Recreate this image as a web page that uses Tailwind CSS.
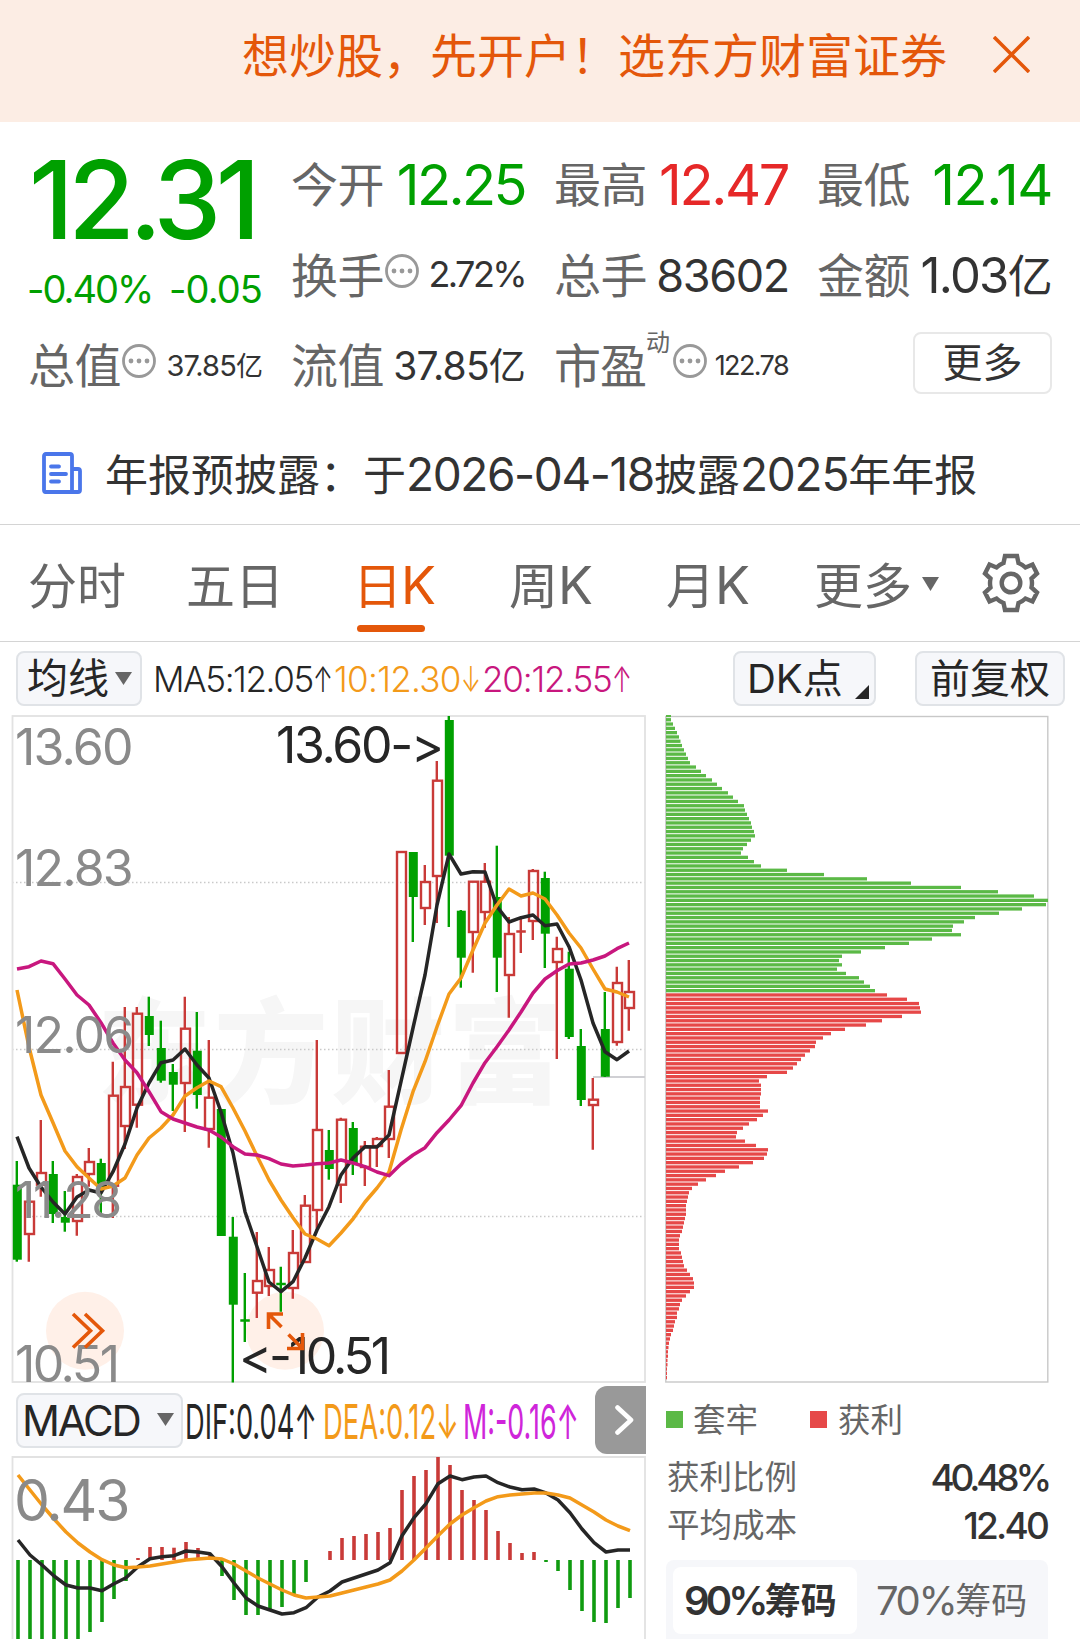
<!DOCTYPE html>
<html lang="zh-CN">
<head>
  <meta charset="UTF-8" />
  <meta name="viewport" content="width=device-width, initial-scale=1.0"/>
  <title>个股行情 - 日K</title>

  <!-- Tailwind CSS -->
  <script src="https://cdn.jsdelivr.net/npm/@tailwindcss/browser@4"></script>
</head>

<body class="bg-white">
<div class="w-[1080px] h-[1639px] overflow-hidden font-['Inter','Noto_Sans_CJK_SC',sans-serif] leading-none text-[#333] whitespace-nowrap">

  <!-- ==================== BANNIERE ==================== -->
  <header class="h-[122px] bg-[#fcede4] flex justify-end items-center pr-[50px] pb-[12px] text-[#e4570a]">
    <span class="text-[47px] mr-[46px]">想炒股，先开户！选东方财富证券</span>
    <svg class="w-[37px] h-[37px] -mt-[2px]" viewBox="0 0 37 37" fill="none" stroke="currentColor" stroke-width="3.6">
      <path d="M1 1L36 36M36 1L1 36"/>
    </svg>
  </header>

  <!-- ==================== COTATION ==================== -->
  <section class="pl-[28px] pr-[29px] pt-[17px] grid grid-cols-[234px_233px_233px_233px] grid-rows-[91px_90px_90px] gap-x-[30px] text-[#666] text-[47px]">
    <div class="row-span-2 text-[#00a000]">
      <div class="mt-[7px] ml-px text-[108px] font-medium tracking-[-5.6px]">12.31</div>
      <div class="mt-[16px] flex justify-between text-[38px]">
        <span class="-ml-px tracking-[-2px]">-0.40%</span><span class="tracking-[-0.9px]">-0.05</span>
      </div>
    </div>
    <div class="flex items-center justify-between"><span class="-ml-px tracking-[-0.5px]">今开</span><span class="text-[56px] tracking-[-2.6px] text-[#00a000]">12.25</span></div>
    <div class="flex items-center justify-between"><span class="-ml-px tracking-[-0.5px]">最高</span><span class="text-[56px] tracking-[-2.4px] text-[#e62828]">12.47</span></div>
    <div class="flex items-center justify-between"><span class="-ml-px tracking-[-0.5px]">最低</span><span class="-mr-px text-[56px] tracking-[-1.5px] text-[#00a000]">12.14</span></div>

    <div class="flex items-center justify-between">
      <div class="flex items-center"><span class="-ml-px tracking-[-0.5px]">换手</span>
        <svg class="w-[34px] h-[34px] -mt-[9px] ml-px" viewBox="0 0 34 34"><circle cx="17" cy="17" r="15.500" fill="none" stroke="#999" stroke-width="2.800"/><g fill="#999"><circle cx="9" cy="17" r="2.400"/><circle cx="17" cy="17" r="2.400"/><circle cx="25" cy="17" r="2.400"/></g></svg>
      </div>
      <span class="-mt-[2px] text-[36px] tracking-[-2.6px] text-[#333]">2.72%</span>
    </div>
    <div class="flex items-center justify-between"><span class="-ml-px tracking-[-0.5px]">总手</span><span class="-mr-px text-[45px] tracking-[-1.3px] text-[#333]">83602</span></div>
    <div class="flex items-center justify-between"><span class="-ml-px tracking-[-0.5px]">金额</span><span class="text-[49px] tracking-[-1.7px] text-[#333]">1.03<span class="text-[45px]">亿</span></span></div>

    <div class="flex items-center justify-between">
      <div class="flex items-center"><span class="tracking-[-0.5px]">总值</span>
        <svg class="w-[34px] h-[34px] -mt-[9px] ml-px" viewBox="0 0 34 34"><circle cx="17" cy="17" r="15.500" fill="none" stroke="#999" stroke-width="2.800"/><g fill="#999"><circle cx="9" cy="17" r="2.400"/><circle cx="17" cy="17" r="2.400"/><circle cx="25" cy="17" r="2.400"/></g></svg>
      </div>
      <span class="text-[29px] tracking-[-0.9px] text-[#333]">37.85<span class="text-[27px]">亿</span></span>
    </div>
    <div class="flex items-center justify-between"><span class="-ml-px tracking-[-0.5px]">流值</span><span class="text-[39px] tracking-[-0.8px] text-[#333]">37.85<span class="text-[37px]">亿</span></span></div>
    <div class="flex items-center justify-between">
      <div class="flex items-center"><span class="-ml-px tracking-[-1px]">市盈</span><span class="text-[24px] -mt-[44px]">动</span>
        <svg class="w-[34px] h-[34px] -mt-[8px] ml-[3px]" viewBox="0 0 34 34"><circle cx="17" cy="17" r="15.500" fill="none" stroke="#999" stroke-width="2.800"/><g fill="#999"><circle cx="9" cy="17" r="2.400"/><circle cx="17" cy="17" r="2.400"/><circle cx="25" cy="17" r="2.400"/></g></svg>
      </div>
      <span class="text-[27px] tracking-[-1.6px] text-[#333]">122.78</span>
    </div>
    <div class="flex items-center justify-end">
      <button class="w-[139px] h-[62px] -mt-[4px] -mr-px border-2 border-[#e8e8e8] rounded-lg text-[40px] text-[#333]">更多</button>
    </div>
  </section>

  <!-- Annonce -->
  <section class="h-[115px] pl-[42px] pt-[13px] flex items-center border-b border-[#d4d4d4] text-[43px]">
    <svg class="w-[40px] h-[42px] mr-[23px] -mt-[2px]" viewBox="0 0 40 42" fill="none" stroke="#4a76ea" stroke-width="3.800" stroke-linecap="round" stroke-linejoin="round">
      <path d="M30 40H3.500Q2 40 2 38V4Q2 2 4 2H28Q30 2 30 4V40H36Q38 40 38 38V19Q38 17 36 17H30.500M9 14.500H17M9 22H24M9 29.500H17"/>
    </svg>
    <span>年报预披露：于<span class="text-[46px] tracking-[-1.4px]">2026-04-18</span>披露<span class="text-[46px] tracking-[-1.2px]">2025</span>年年报</span>
  </section>

  <!-- ==================== ONGLETS ==================== -->
  <nav class="h-[117px] pl-[28px] pt-[6px] flex items-center border-b border-[#d4d4d4] text-[49px] text-[#666]">
    <a>分时</a>
    <a class="ml-[60px]">五日</a>
    <a class="ml-[69px] relative text-[#e4570a]">日<span class="text-[52px] -ml-px">K</span>
      <i class="absolute left-[4px] -bottom-[20px] w-[68px] h-[7px] rounded-full bg-[#e4570a]"></i>
    </a>
    <a class="ml-[73px]">周<span class="text-[52px]">K</span></a>
    <a class="ml-[73px]">月<span class="text-[52px]">K</span></a>
    <a class="ml-[64px] flex items-center">更多
      <svg class="w-[17px] h-[14px] ml-[10px] -mt-[5px]" viewBox="0 0 17 14"><path d="M0 0H17L8.500 14Z" fill="#666"/></svg>
    </a>
    <svg class="w-[58px] h-[60px] ml-[43px] -mt-[6px]" viewBox="-29 -30 58 60" fill="none" stroke="#666" stroke-width="4.400">
      <path d="M-6 -27H6L7.500 -20Q11.500 -18.500 14.500 -15.500L21.500 -18.500L26 -9.500L20.500 -4.500Q21.500 0 20.500 4.500L26 9.500L21.500 18.500L14.500 15.500Q11.500 18.500 7.500 20L6 27H-6L-7.500 20Q-11.500 18.500 -14.500 15.500L-21.500 18.500L-26 9.500L-20.500 4.500Q-21.500 0 -20.500 -4.500L-26 -9.500L-21.500 -18.500L-14.500 -15.500Q-11.500 -18.500 -7.500 -20Z"/>
      <circle r="9.300"/>
    </svg>
  </nav>

  <!-- ==================== BARRE D'INDICATEURS ==================== -->
  <div class="h-[73px] pl-[16px] pr-[15px] flex items-center text-[#262626]">
    <button class="w-[126px] h-[55px] border-2 border-[#e0e3e7] rounded-lg bg-[#f6f7fa] flex items-center pl-[9px] text-[41px]">均线
      <svg class="w-[17px] h-[13px] ml-[6px]" viewBox="0 0 17 13"><path d="M0 0H17L8.500 13Z" fill="#666"/></svg>
    </button>
    <div class="flex items-center text-[35px] font-[350] ml-[11px] pt-[2px]">
      <span class="flex w-[181px] tracking-[-1.4px]">MA5:12.05<i class="not-italic inline-block w-[17px] origin-left scale-x-[.68]">↑</i></span>
      <span class="flex w-[148px] tracking-[-0.7px] text-[#f39a1a]">10:12.30<i class="not-italic inline-block w-[17px] origin-left scale-x-[.68]">↓</i></span>
      <span class="flex tracking-[-1.2px] text-[#c8177e]">20:12.55<i class="not-italic inline-block w-[17px] origin-left scale-x-[.68]">↑</i></span>
    </div>
    <button class="relative ml-auto w-[143px] h-[55px] border-2 border-[#e0e3e7] rounded-lg bg-[#f6f7fa] text-left pl-[12px] text-[40px]">DK点
      <svg class="absolute right-[5px] bottom-[5px] w-[14px] h-[14px]" viewBox="0 0 14 14"><path d="M14 0V14H0Z" fill="#262626"/></svg>
    </button>
    <button class="ml-[39px] w-[150px] h-[55px] border-2 border-[#e0e3e7] rounded-lg bg-[#f6f7fa] text-[40px]">前复权</button>
  </div>

  <!-- ==================== GRAPHIQUES ==================== -->
  <main class="flex">
    <div class="w-[650px]">
      <!-- Chandeliers -->
      <svg class="block w-[650px] h-[668px]" viewBox="0 715 650 668">
        <text x="97" y="1094" font-family="Noto Sans CJK SC" font-weight="900" font-size="114" letter-spacing="3" fill="#f6f6f6">东方财富</text>
        <g stroke="#c9c9c9" stroke-width="1.300" stroke-dasharray="1.500 2.500">
          <path d="M12 882.500H645M12 1049.500H645M12 1216.500H645"/>
        </g>
        <rect x="12.500" y="716" width="632.500" height="666" fill="none" stroke="#e2e2e2" stroke-width="1.800"/>
        <path d="M593 1077H645" stroke="#d0d0d4" stroke-width="1.800"/>
        <circle cx="85" cy="1330.700" r="39" fill="#fff0e8"/>
        <circle cx="285" cy="1330.700" r="39" fill="#fff0e8"/>
        <g id="candles" stroke-width="2.400"></g>
        <g id="averages" fill="none" stroke-width="3.500" stroke-linejoin="round"></g>
        <g font-size="50" letter-spacing="-1.800" fill="#8a8a8a">
          <text x="15" y="764.500">13.60</text>
          <text x="15" y="885.500">12.83</text>
          <text x="15" y="1052.500">12.06</text>
          <text x="15" y="1218" letter-spacing="-2.300">11.28</text>
          <text x="15" y="1381.500" letter-spacing="-2.500">10.51</text>
        </g>
        <g class="[font-variant-ligatures:none] [font-feature-settings:'calt'_0]" font-size="50" fill="#262626">
          <text x="276" y="762.500" textLength="168">13.60-&gt;</text>
          <text x="239" y="1374" textLength="152">&lt;-10.51</text>
        </g>
        <g fill="none" stroke="#e4570a" stroke-width="3.600">
          <path d="M73 1314L90.500 1330.700L73 1347.500M85 1314L102.500 1330.700L85 1347.500"/>
          <path d="M283 1314H268.500V1329M268.500 1314L281.500 1327M288.500 1334.500L302 1348M287 1348.500H302.500V1333"/>
        </g>
      </svg>

      <!-- Barre MACD -->
      <div class="h-[73px] pl-[16px] pr-[4px] flex items-start">
        <button class="mt-[10px] w-[167px] h-[55px] border-2 border-[#e0e3e7] rounded-lg bg-[#f6f7fa] flex items-center pl-[4px] text-[42px] tracking-[-2.2px] text-[#262626]">MACD
          <svg class="w-[17px] h-[13px] ml-[17px] -mt-[3px]" viewBox="0 0 17 13"><path d="M0 0H17L8.500 13Z" fill="#666"/></svg>
        </button>
        <svg class="w-[400px] h-[60px] mt-[8px]" viewBox="183 1391 400 60" font-size="48">
          <text x="185" y="1438.500" textLength="132" lengthAdjust="spacingAndGlyphs" fill="#262626">DIF:0.04↑</text>
          <text x="323" y="1438.500" textLength="136" lengthAdjust="spacingAndGlyphs" fill="#f39a1a">DEA:0.12↓</text>
          <text x="463" y="1438.500" textLength="116" lengthAdjust="spacingAndGlyphs" fill="#cf25da">M:-0.16↑</text>
        </svg>
        <button class="ml-auto mt-[3px] w-[51px] h-[68px] rounded-l-xl bg-[#999] flex items-center pl-[20px]">
          <svg class="w-[19px] h-[30px]" viewBox="0 0 19 30" fill="none" stroke="#fff" stroke-width="4.600" stroke-linecap="round" stroke-linejoin="round"><path d="M2.500 2.500L16 15L2.500 27.500"/></svg>
        </button>
      </div>

      <!-- MACD -->
      <svg class="block w-[650px] h-[184px]" viewBox="0 1456 650 184">
        <path d="M12.500 1642V1457H645V1642" fill="none" stroke="#e2e2e2" stroke-width="1.800"/>
        <g id="bars" stroke-width="3.600"></g>
        <g id="macd" fill="none" stroke-width="3.500" stroke-linejoin="round"></g>
        <text x="14" y="1520.500" font-size="57" letter-spacing="-2.200" fill="#8a8a8a">0.43</text>
      </svg>
    </div>

    <!-- Répartition des jetons -->
    <div class="w-[382px] ml-[16px]">
      <svg class="block w-[384px] h-[668px] -ml-px" viewBox="665 715 384 668">
        <rect x="665.800" y="716.500" width="382" height="665.500" fill="none" stroke="#c8c8c8" stroke-width="1.400"/>
        <g id="chips"></g>
      </svg>
      <div class="mt-[21px] h-[34px] flex items-center text-[32.5px] text-[#666]">
        <i class="w-[17px] h-[17px] bg-[#5bb946] -mt-[3px] mr-[10px]"></i>套牢
        <i class="w-[17px] h-[17px] bg-[#e64848] -mt-[3px] ml-[52px] mr-[11px]"></i>获利
      </div>
      <div class="mt-[16px] h-[48px] flex items-center justify-between text-[32.5px] text-[#666]"><span class="ml-px">获利比例</span><span class="-mt-[2px] text-[37px] font-medium tracking-[-4.2px] text-[#333]">40.48%</span></div>
      <div class="h-[49px] flex items-center justify-between text-[32.5px] text-[#666]"><span class="ml-px">平均成本</span><span class="-mt-[2px] mr-px text-[37px] font-medium tracking-[-2.8px] text-[#333]">12.40</span></div>
      <div class="mt-[9px] h-[90px] p-[7px] pr-0 flex rounded-t-lg bg-[#f6f7fa] text-[36px] text-[#666]">
        <div class="w-[184px] h-[67px] rounded-lg bg-white flex items-center pl-[11px] text-[#333] font-semibold"><span class="text-[40px] tracking-[-3.8px]">90%</span>筹码</div>
        <div class="h-[67px] flex items-center pl-[19px]"><span class="text-[40px] tracking-[-2.4px]">70%</span>筹码</div>
      </div>
    </div>
  </main>
</div>

<script>
  const RED = '#c93a38', GREEN = '#00a000';

  // haut, haut du corps, bas du corps, bas, couleur (r/g)
  const candles = [
    [1161,1184.7,1259.7,1261.7,'g'],[1189,1201.7,1234,1261.7,'r'],[1120,1173,1184.7,1196.7,'r'],[1161,1174,1214,1223,'g'],
    [1191,1217,1222.7,1231.7,'g'],[1174,1177,1221,1235.7,'r'],[1148,1162,1174,1186.7,'r'],[1158.7,1163,1187,1213,'g'],
    [1061.7,1095.7,1185.7,1218,'r'],[1007,1087,1126,1149,'r'],[1007,1013.7,1104.7,1127.7,'r'],[996.7,1016,1035,1046,'g'],
    [1020.7,1048,1080.7,1082.7,'g'],[1064,1072,1084.7,1111,'g'],[996.7,1028.7,1083,1132,'r'],[1012,1050.7,1095,1108.7,'g'],
    [1040,1097.7,1129,1147.7,'r'],[1109,1109,1236,1236,'g'],[1217,1236.7,1304.7,1382.5,'g'],[1273,1319.5,1321.5,1342,'g'],
    [1232,1281,1292.7,1318,'r'],[1247,1270,1286,1296,'r'],[1266.7,1283,1285,1311.7,'g'],[1230,1253,1288,1298.7,'r'],
    [1195,1205.7,1262,1263,'r'],[1040,1130,1210,1231.7,'r'],[1130,1150,1169,1179.7,'g'],[1117.7,1119.7,1184.7,1203,'r'],
    [1122,1128,1163,1175,'g'],[1141,1146.7,1167,1186,'r'],[1137,1139,1146,1167,'r'],[1070,1106.7,1139,1158,'r'],
    [852,852,1053,1053,'r'],[852,852,897,942,'g'],[865,882,908,925,'r'],[761,780.7,876,923,'r'],
    [716,720,855.7,927,'g'],[910,910.7,957.7,987.7,'g'],[881,881.7,932,972.7,'r'],[863,881.7,912,927.7,'r'],
    [845.7,897,957.7,992,'g'],[917,934,975,1017.7,'r'],[918,930.5,932.5,953,'r'],[869,871,921,940,'r'],
    [871.7,878,933.7,968,'g'],[936.7,949,962,1059,'r'],[951.7,968.7,1037,1039,'g'],[1029,1046,1100,1106,'g'],
    [1078,1099.7,1105,1149.7,'r'],[992,1029,1076.7,1077,'g'],[966.7,983,1042,1045.7,'r'],[960,992,1008,1030.7,'r']
  ];
  const ma5 = [1136.7,1168,1187,1202,1214,1197,1190,1193,1171.7,1144,1108,1083,1062.7,1060,1049,1065,1078,1112,1153,1211.7,1246.7,1282,1291.7,1281.7,1258,1230,1206.7,1175,1158,1146.7,1147,1135,1081.7,1028,975,905,854,874,871.7,872,906.7,922,917.7,915,925.7,924,946.7,980,1023,1051.7,1059.7,1051];
  const ma10 = [990,1047,1095,1122.7,1151,1166.7,1178,1189,1186,1178,1155,1138,1128,1115,1096,1087.7,1081,1086.7,1108,1131,1156,1180,1200,1217.7,1234,1239,1245.7,1233,1219,1202,1188,1172,1130,1091.7,1061.7,1026.7,994,978,950,923,905,889,896,893,899,915,933,948,969,989,992,997];
  const ma20 = [969,966.7,961,963.7,979,995,1005,1022.7,1043,1060,1072.7,1091.7,1111.7,1119,1123,1127,1130,1137,1146.7,1154,1155,1158.7,1164,1166,1165,1163.7,1163,1160,1163,1166.7,1172,1175.7,1164,1155,1147.7,1132.7,1120,1105.7,1083,1062.7,1046.7,1030,1012,993,979,970.7,964,963,960,956,948.7,943];

  // MACD, ligne zéro à 1560
  const hist = [1641,1641,1641,1641,1641,1641,1632,1622,1599,1581,1558,1547,1547,1547.7,1542,1548,1554.7,1576,1600,1615,1615,1610,1607,1596,1582,1560,1551,1538,1536,1534,1532,1528,1490,1476,1470,1457,1465,1490,1500,1510,1531,1543,1553,1552,1562,1571,1590,1611,1622,1623,1608,1598];
  const dif = [1540,1555,1565,1576,1585,1588,1588,1590.7,1583.7,1577.7,1566.7,1558.7,1556.7,1555.7,1551,1552,1553.7,1566.7,1583,1598,1606,1610,1614,1612.7,1607.7,1597,1591,1582,1578,1574,1570,1562.7,1535.7,1517.7,1503.7,1483.7,1476,1479.7,1477,1476,1482.7,1487,1489.7,1489,1493,1500,1512.7,1529,1542.7,1552,1550,1550];
  const dea = [1475,1490,1505,1519,1532,1543,1552,1559.7,1565,1567.7,1567,1566,1564,1562,1560,1559,1558,1559,1564,1571,1578,1584,1590,1595,1598,1597,1596,1593,1590,1587,1584,1580,1571,1560,1548,1535.7,1524,1515,1507.7,1501,1496.7,1495,1494,1493,1493,1495,1498,1505,1512,1520,1526,1530.7];

  const chips = [5,5,7,9,11,13,14.5,16,18,20,22,24,30,35,40,46,51,56,62,67,72,78,79,81,83,85,86,88,89,85,81,77,75,82,88,95,121,158,201,245,295,332,368,382,380,356,333,309,298,287,286,295,266,243,219,195,176,173,176,171,180,193,198,204,209,
    221,241,253,254,255,236,216,200,179,165,157,150,149,144,139,135,131,127,121,101,93,95,95,95,94,94,94,102,97,91,83,77,71,70,79,90,102,101,98,87,73,59,50,40,32,26,23,22,21,20,20,20,19,18,17,16,14,13,13,13,15,16,17,18,21,24,27,28,28,24,20,16,14,13,11,11,9,8,7,5,4,3,2.5,2,2,1.5,1.5,1,1,1];

  document.getElementById('candles').innerHTML = candles.map(([h, t, b, l, c], i) => {
    const x = 17.3 + i * 12;
    if (b - t < 3) {
      const s = c === 'g' ? GREEN : RED;
      return `<path d="M${x - 0.5} ${h}V${l}M${x - 5} ${(t + b) / 2}H${x + 4.5}" stroke="${s}"/>`;
    }
    if (c === 'g') return `<path d="M${x - 0.5} ${h}V${l}" stroke="${GREEN}"/><rect x="${x - 4.5}" y="${t}" width="9" height="${b - t}" fill="${GREEN}"/>`;
    return `<path d="M${x - 0.5} ${h}V${t}M${x - 0.5} ${b}V${l}" stroke="${RED}"/><rect x="${x - 4.3}" y="${t}" width="9" height="${b - t}" fill="none" stroke="${RED}"/>`;
  }).join('');

  const line = (ys, x0, color) => `<polyline points="${ys.map((y, i) => (x0 + i * 12) + ',' + y).join(' ')}" stroke="${color}"/>`;
  document.getElementById('averages').innerHTML = line(ma5, 17, '#262626') + line(ma10, 17, '#f39a1a') + line(ma20, 17, '#c8177e');

  document.getElementById('bars').innerHTML = hist.map((y, i) =>
    `<path d="M${18 + i * 12} 1560V${y}" stroke="${y > 1560 ? '#109b10' : RED}"/>`).join('');
  document.getElementById('macd').innerHTML = line(dif, 18, '#262626') + line(dea, 18, '#f39a1a');

  document.getElementById('chips').innerHTML = chips.map((w, i) =>
    `<rect x="666" y="${(713.8 + i * 4.3).toFixed(1)}" width="${w}" height="3.3" fill="${i < 65 ? '#5bb946' : '#e64848'}"/>`).join('');
</script>
</body>
</html>
